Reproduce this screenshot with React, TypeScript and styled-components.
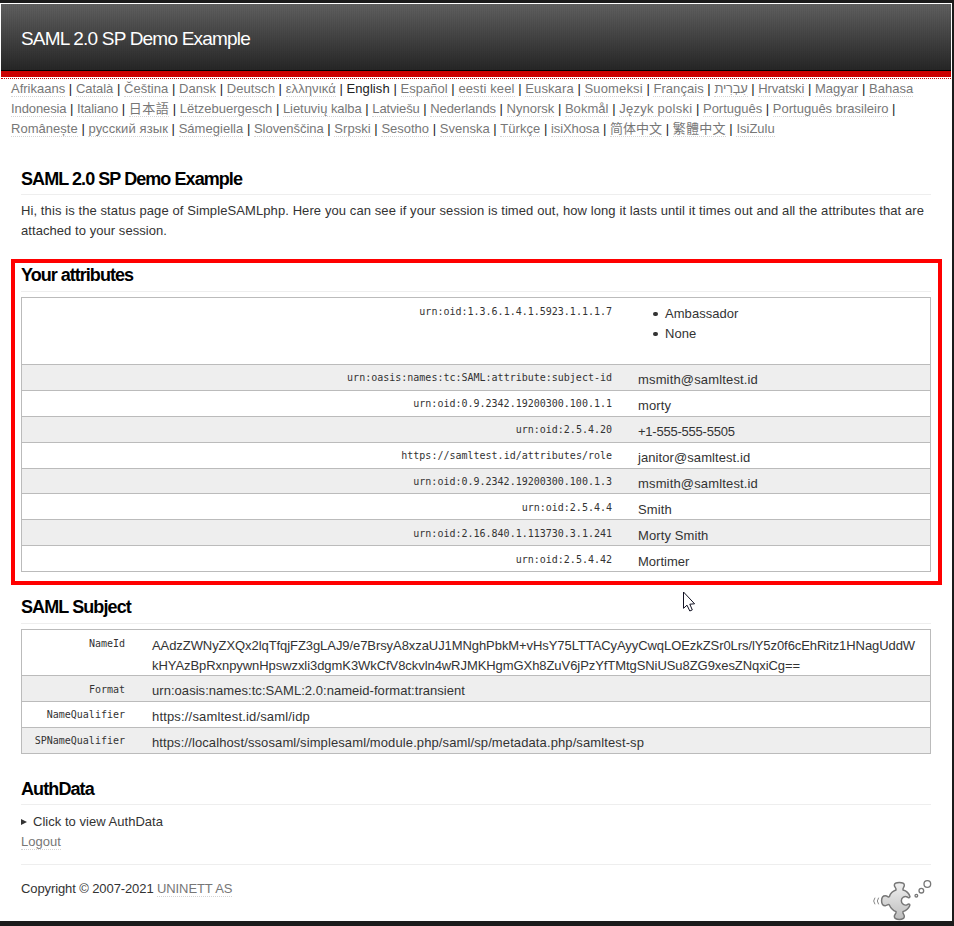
import React from 'react';
import styled, { createGlobalStyle } from 'styled-components';

const GlobalStyle = createGlobalStyle`
  *, *::before, *::after { box-sizing: border-box; }
  body {
    margin: 0;
    background: #1b1b1b;
    color: #333;
    font: 13px/20px "Liberation Sans", Arial, "Noto Sans CJK SC", sans-serif;
  }
`;

const Frame = styled.div`
  position: relative;
  width: 954px;
  height: 926px;
  padding: 3px 2px 5px 0;
  background: #1b1b1b;
  overflow: hidden;
`;

const Page = styled.div`
  height: 918px;
  padding: 1px 1px 0;
  background: #fff;
`;

const Header = styled.header`
  display: flex;
  align-items: center;
  height: 67px;
  padding: 4px 20px 0;
  border-bottom: 1px solid #000;
  background:
    repeating-linear-gradient(90deg, rgba(0, 0, 0, 0.05) 0 1px, transparent 1px 2px),
    linear-gradient(#606060, #262626);
`;

const SiteTitle = styled.h1`
  margin: 0;
  color: #fff;
  font-size: 19px;
  font-weight: 400;
  line-height: 22px;
  letter-spacing: -0.8px;
  white-space: nowrap;
`;

const RedBar = styled.div`
  height: 6px;
  background: #c00;
`;

const DottedRule = styled.div`
  height: 2px;
  border-bottom: 1px dotted #c00;
`;

const Languages = styled.nav`
  padding-left: 10px;
  color: #222;
`;

const LanguageLine = styled.div<{ $tracking: number }>`
  height: 20px;
  letter-spacing: ${(p) => p.$tracking}px;
  white-space: nowrap;
`;

const Link = styled.a`
  color: #777;
  border-bottom: 1px dotted #d4d4d4;
  text-decoration: none;
`;

const LanguageName = styled(Link)<{ $tracking: number; $current: boolean }>`
  letter-spacing: ${(p) => p.$tracking}px;
  color: ${(p) => (p.$current ? '#222' : '#777')};
  border-bottom-color: ${(p) => (p.$current ? 'transparent' : '#d4d4d4')};
`;

const Content = styled.main`
  padding: 30px 20px 0;
`;

const Heading = styled.h2<{ $height: number; $tracking?: number }>`
  height: ${(p) => p.$height}px;
  margin: 0;
  border-bottom: 1px solid #eee;
  color: #000;
  font-size: 18px;
  line-height: 20px;
  letter-spacing: ${(p) => p.$tracking ?? -0.9}px;
`;

const Intro = styled.p`
  height: 40px;
  margin: 6px 0 18px;
  white-space: nowrap;
`;

const Tracked = styled.span<{ $tracking?: number }>`
  display: block;
  letter-spacing: ${(p) => p.$tracking ?? 0}px;
  white-space: nowrap;
`;

const Highlight = styled.section`
  width: 931px;
  height: 326px;
  margin: 0 0 12px -10px;
  padding: 2px 7px 0 6px;
  border: 4px solid #f00;
`;

const Table = styled.div`
  width: 910px;
  margin-top: 5px;
  border: 1px solid #bbb;
  border-bottom: 0;
`;

const Row = styled.div<{ $height: number; $keyColumn: number }>`
  display: grid;
  grid-template-columns: ${(p) => p.$keyColumn}px 1fr;
  height: ${(p) => p.$height}px;
  border-bottom: 1px solid #bbb;

  &:nth-child(even) {
    background: #eee;
  }
`;

const Key = styled.div<{ $top: number; $gap: number }>`
  padding: ${(p) => p.$top}px ${(p) => p.$gap}px 0 0;
  font: 10px/20px "DejaVu Sans Mono", monospace;
  text-align: right;
  white-space: nowrap;
`;

const Value = styled.div<{ $top: number }>`
  padding-top: ${(p) => p.$top}px;
`;

const BulletList = styled.ul`
  margin: 0;
  padding: 0 0 0 15px;
  list-style: none;
`;

const Bullet = styled.li`
  display: flex;
  align-items: center;
  gap: 7.5px;
  height: 20px;
  letter-spacing: 0.05px;

  &::before {
    content: "";
    width: 4.5px;
    height: 4.5px;
    border-radius: 50%;
    background: #333;
  }
`;

const Subject = styled.section`
  margin-bottom: 25px;
`;

const Disclosure = styled.div`
  display: flex;
  align-items: center;
  gap: 6px;
  height: 20px;
  margin-top: 7px;
`;

const Logout = styled.div`
  height: 20px;
  margin-bottom: 12px;
`;

const Footer = styled.footer`
  display: flex;
  justify-content: space-between;
  align-items: flex-start;
  height: 56px;
  margin-right: -2px;
  padding-top: 14px;
`;

const FooterRule = styled.div`
  height: 1px;
  background: #eee;
`;

const Pointer = styled.svg`
  position: absolute;
  left: 683px;
  top: 591px;
`;

type RowData = {
  name: string;
  lines?: [string, number][];
  items?: string[];
  height: number;
  keyTop: number;
  valueTop: number;
};

const attributes: RowData[] = [
  { name: 'urn:oid:1.3.6.1.4.1.5923.1.1.1.7', items: ['Ambassador', 'None'], height: 67, keyTop: 4, valueTop: 6 },
  { name: 'urn:oasis:names:tc:SAML:attribute:subject-id', lines: [['msmith@samltest.id', 0.155]], height: 26, keyTop: 3, valueTop: 5 },
  { name: 'urn:oid:0.9.2342.19200300.100.1.1', lines: [['morty', 0.1]], height: 26, keyTop: 3, valueTop: 5 },
  { name: 'urn:oid:2.5.4.20', lines: [['+1-555-555-5505', -0.23]], height: 26, keyTop: 3, valueTop: 5 },
  { name: 'https://samltest.id/attributes/role', lines: [['janitor@samltest.id', 0.08]], height: 26, keyTop: 3, valueTop: 5 },
  { name: 'urn:oid:0.9.2342.19200300.100.1.3', lines: [['msmith@samltest.id', 0.155]], height: 25, keyTop: 3, valueTop: 5 },
  { name: 'urn:oid:2.5.4.4', lines: [['Smith', 0.1]], height: 26, keyTop: 4, valueTop: 6 },
  { name: 'urn:oid:2.16.840.1.113730.3.1.241', lines: [['Morty Smith', 0.1]], height: 26, keyTop: 4, valueTop: 6 },
  { name: 'urn:oid:2.5.4.42', lines: [['Mortimer', 0]], height: 26, keyTop: 4, valueTop: 6 },
];

const subject: RowData[] = [
  {
    name: 'NameId',
    lines: [
      ['AAdzZWNyZXQx2lqTfqjFZ3gLAJ9/e7BrsyA8xzaUJ1MNghPbkM+vHsY75LTTACyAyyCwqLOEzkZSr0Lrs/lY5z0f6cEhRitz1HNagUddW', -0.071],
      ['kHYAzBpRxnpywnHpswzxli3dgmK3WkCfV8ckvln4wRJMKHgmGXh8ZuV6jPzYfTMtgSNiUSu8ZG9xesZNqxiCg==', -0.064],
    ],
    height: 46,
    keyTop: 4,
    valueTop: 6,
  },
  { name: 'Format', lines: [['urn:oasis:names:tc:SAML:2.0:nameid-format:transient', 0.045]], height: 26, keyTop: 4, valueTop: 5 },
  { name: 'NameQualifier', lines: [['https://samltest.id/saml/idp', 0.172]], height: 26, keyTop: 3, valueTop: 5 },
  { name: 'SPNameQualifier', lines: [['https://localhost/ssosaml/simplesaml/module.php/saml/sp/metadata.php/samltest-sp', 0.108]], height: 26, keyTop: 3, valueTop: 5 },
];

// Each language is its name and the letter spacing that its link is set with.
const languageLines: { tracking: number; names: [string, number][]; open?: boolean }[] = [
  {
    tracking: 0.033,
    names: [
      ['Afrikaans', 0], ['Català', -0.03], ['Čeština', 0.03], ['Dansk', 0.03], ['Deutsch', 0.08],
      ['ελληνικά', 0.1], ['English', 0.1], ['Español', 0.03], ['eesti keel', 0.12], ['Euskara', 0.12],
      ['Suomeksi', 0.15], ['Français', 0.05], ['עִבְרִית', -0.25], ['Hrvatski', -0.12], ['Magyar', 0],  ['Bahasa', 0.03],
    ],
  },
  {
    tracking: 0,
    open: true,
    names: [
      ['Indonesia', -0.1], ['Italiano', -0.12], ['日本語', 0.5], ['Lëtzebuergesch', 0], ['Lietuvių kalba', -0.05],
      ['Latviešu', -0.15], ['Nederlands', -0.07], ['Nynorsk', 0], ['Bokmål', 0.05], ['Język polski', 0.26],
      ['Português', 0], ['Português brasileiro', 0],
    ],
  },
  {
    tracking: 0.029,
    names: [
      ['Românește', 0.03], ['русский язык', 0.1], ['Sámegiella', 0.03], ['Slovenščina', -0.04], ['Srpski', 0.03],
      ['Sesotho', 0], ['Svenska', 0], ['Türkçe', 0.03], ['isiXhosa', -0.1], ['简体中文', 0.03],
      ['繁體中文', 0.2], ['IsiZulu', 0],
    ],
  },
];

function AttributeTable({ rows, keyColumn, gap }: { rows: RowData[]; keyColumn: number; gap: number }) {
  return (
    <Table>
      {rows.map((row) => (
        <Row key={row.name} $height={row.height} $keyColumn={keyColumn}>
          <Key $top={row.keyTop} $gap={gap}>{row.name}</Key>
          <Value $top={row.valueTop}>
            {row.items && (
              <BulletList>
                {row.items.map((item) => (
                  <Bullet key={item}>{item}</Bullet>
                ))}
              </BulletList>
            )}
            {row.lines?.map(([text, tracking]) => (
              <Tracked key={text} $tracking={tracking}>{text}</Tracked>
            ))}
          </Value>
        </Row>
      ))}
    </Table>
  );
}

function PuzzleLogo() {
  return (
    <svg width="61" height="42" viewBox="36 27 183 126" fill="none">
      <defs>
        <linearGradient id="piece" x1="0" y1="0" x2="0" y2="1">
          <stop offset="0" stopColor="#f0f0f0" />
          <stop offset="1" stopColor="#bdbdbd" />
        </linearGradient>
      </defs>
      <path
        d="M108 60 C110 54 102 51 103 45 C104 35 132 35 133 45 C134 51 127 54 129 60 C137 62 147 70 150 80 C149 84 145 84 142 81 C134 77 124 82 124 92 C124 102 134 108 142 104 C146 101 151 102 149 107 C145 117 137 122 129 125 C127 132 134 134 133 140 C132 151 104 151 103 140 C102 134 110 131 108 125 C98 121 92 114 88 105 C85 101 82 107 76 107 C61 107 61 77 76 77 C83 77 85 84 88 80 C91 70 99 63 108 60 Z"
        fill="url(#piece)"
        stroke="#777"
        strokeWidth="4.4"
      />
      <path d="M45 83 Q37 93 45 103 M56 83 Q48 93 56 103" stroke="#888" strokeWidth="3" />
      <circle cx="169" cy="77" r="4" stroke="#777" strokeWidth="4" />
      <circle cx="184" cy="62" r="7" stroke="#777" strokeWidth="4" />
      <circle cx="202" cy="42" r="10" stroke="#777" strokeWidth="4" />
    </svg>
  );
}

export default function App() {
  return (
    <Frame>
      <GlobalStyle />
      <Page>
        <Header>
          <SiteTitle>SAML 2.0 SP Demo Example</SiteTitle>
        </Header>
        <RedBar />
        <DottedRule />
        <Languages>
          {languageLines.map((line) => (
            <LanguageLine key={line.names[0][0]} $tracking={line.tracking}>
              {line.names.map(([name, tracking], i) => (
                <React.Fragment key={name}>
                  <LanguageName $tracking={tracking} $current={name === 'English'}>{name}</LanguageName>
                  {i < line.names.length - 1 ? ' | ' : line.open ? ' |' : ''}
                </React.Fragment>
              ))}
            </LanguageLine>
          ))}
        </Languages>
        <Content>
          <Heading $height={26} $tracking={-0.935}>SAML 2.0 SP Demo Example</Heading>
          <Intro>
            <Tracked $tracking={0.093}>
              Hi, this is the status page of SimpleSAMLphp. Here you can see if your session is timed out, how long it
              lasts until it times out and all the attributes that are
            </Tracked>
            <Tracked $tracking={0.059}>attached to your session.</Tracked>
          </Intro>
          <Highlight>
            <Heading $height={27} $tracking={-0.98}>Your attributes</Heading>
            <AttributeTable rows={attributes} keyColumn={616} gap={26} />
          </Highlight>
          <Subject>
            <Heading $height={27}>SAML Subject</Heading>
            <AttributeTable rows={subject} keyColumn={130} gap={27} />
          </Subject>
          <Heading $height={26}>AuthData</Heading>
          <Disclosure>
            <svg width="6" height="6" viewBox="0 0 6 6">
              <path d="M0 0 L6 3 L0 6 Z" fill="#333" />
            </svg>
            <Tracked $tracking={0.03}>Click to view AuthData</Tracked>
          </Disclosure>
          <Logout>
            <Link>Logout</Link>
          </Logout>
          <FooterRule />
          <Footer>
            <Tracked $tracking={-0.1}>
              Copyright © 2007-2021 <Link>UNINETT AS</Link>
            </Tracked>
            <PuzzleLogo />
          </Footer>
        </Content>
      </Page>
      <Pointer width="13" height="21" viewBox="0 0 13 21">
        <path d="M0.5 1 V17.3 L4 14.2 L6.8 20 L9.3 18.9 L6.8 13.2 L11.6 12.8 Z" fill="#fff" stroke="#112" strokeWidth="1" />
      </Pointer>
    </Frame>
  );
}
